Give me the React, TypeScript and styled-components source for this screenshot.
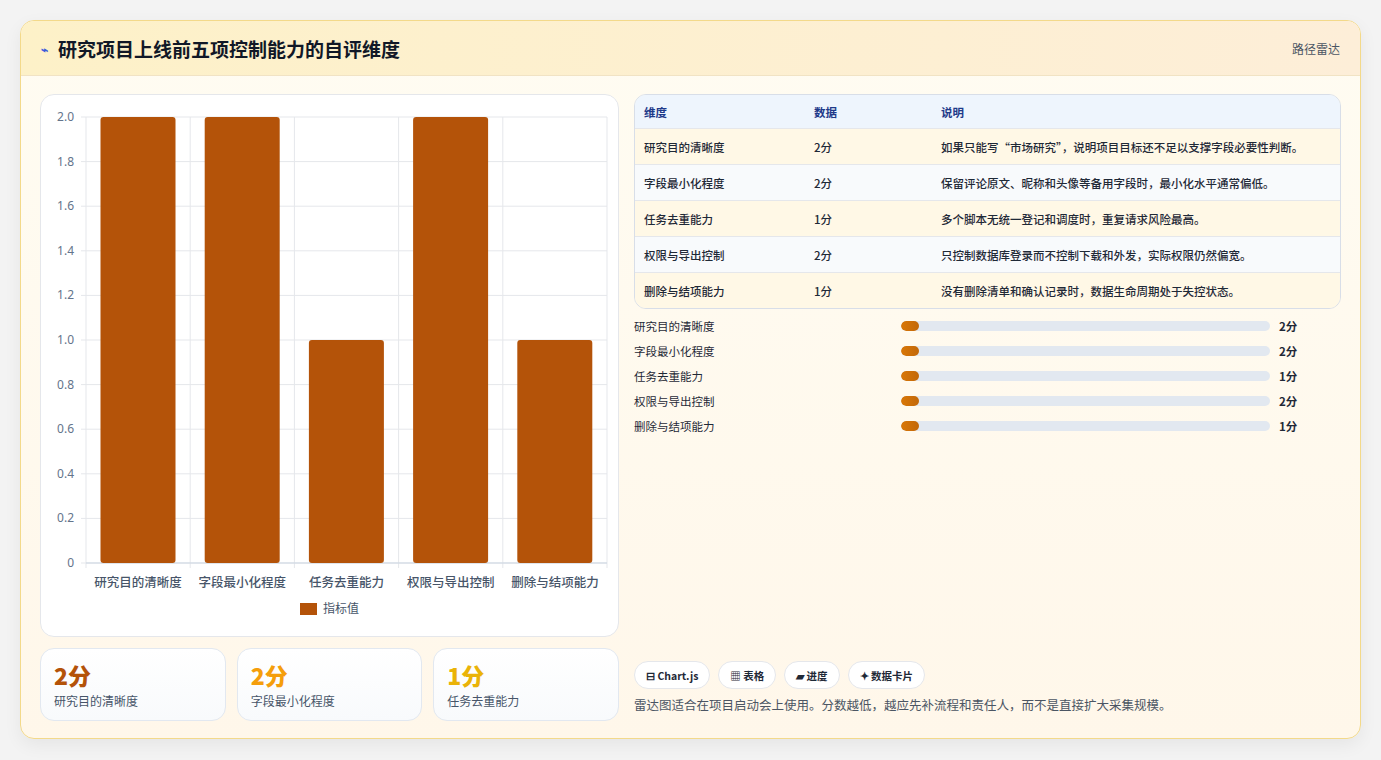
import React from "react";
import styled, { createGlobalStyle } from "styled-components";

const G = createGlobalStyle`
  html,body{margin:0;padding:0;background:#f3f3f3;}
  body{font-family:"Noto Sans CJK SC","Noto Sans",sans-serif;}
`;
const Page = styled.div`padding:20px 20px 20px 20px;width:1381px;box-sizing:border-box;`;
const Card = styled.div`
  width:1341px;height:719px;box-sizing:border-box;border:1px solid #f3d98a;border-radius:14px;
  background:linear-gradient(180deg,#fffcf2,#fff7ea);overflow:hidden;display:flex;flex-direction:column;
  box-shadow:0 6px 18px rgba(0,0,0,0.06);
`;
const Header = styled.div`
  height:54px;flex:none;display:flex;align-items:center;justify-content:space-between;padding:0 20px;
  background:linear-gradient(90deg,#fdf1c8,#fdeed8);border-bottom:1px solid #f1e3c4;
`;
const Title = styled.h1`margin:0;font-size:19px;font-weight:700;color:#111827;display:flex;align-items:center;gap:10px;`;
const Icon = styled.span`color:#3b5bdb;font-size:12px;`;
const Tag = styled.span`font-size:12px;color:#4b5563;`;
const Body = styled.div`flex:1;display:grid;grid-template-columns:579px 707px;gap:15px;padding:18px 19px 18px 19px;`;
const Col = styled.div`display:flex;flex-direction:column;gap:11px;`;
const ChartBox = styled.div`height:543px;background:#fff;border:1px solid #e5e7eb;border-radius:14px;box-sizing:border-box;`;
const Stats = styled.div`display:grid;grid-template-columns:repeat(3,1fr);gap:11px;`;
const Stat = styled.div`height:73px;box-sizing:border-box;border:1px solid #e2e8f0;border-radius:14px;background:linear-gradient(180deg,#fff,#f8fafc);padding:11px 13px;`;
const Num = styled.div<{ c: string }>`font-size:23px;font-weight:800;color:${p => p.c};line-height:30px;`;
const SLabel = styled.div`font-size:12px;color:#475569;margin-top:2px;`;
const Table = styled.div`border:1px solid #d8dee8;border-radius:12px;overflow:hidden;`;
const Row = styled.div<{ head?: boolean; alt?: boolean }>`
  display:grid;grid-template-columns:170px 127px 1fr;height:${p => (p.head ? 33 : 35)}px;align-items:center;padding:0 9px;
  font-size:11.5px;font-weight:${p => (p.head ? 700 : 500)};color:${p => (p.head ? "#1e3a8a" : "#1f2937")};
  background:${p => (p.head ? "#eef5fd" : p.alt ? "#f8fafc" : "#fff8e6")};
  border-top:${p => (p.head ? "none" : "1px solid #e5e7eb")};
`;
const Bars = styled.div`display:flex;flex-direction:column;gap:7px;margin-top:8px;`;
const BarRow = styled.div`display:grid;grid-template-columns:267px 369px 1fr;align-items:center;height:18px;font-size:11.5px;color:#1f2937;`;
const Track = styled.div`height:10px;border-radius:5px;background:#e2e8f0;overflow:hidden;`;
const Fill = styled.div`height:100%;border-radius:5px;background:linear-gradient(90deg,#d97706,#c2680a);`;
const Val = styled.span`font-weight:700;padding-left:9px;`;
const Spacer = styled.div`flex:1;`;
const Chips = styled.div`display:flex;gap:8px;`;
const Chip = styled.span`height:28px;box-sizing:border-box;padding:0 11px;display:flex;align-items:center;border:1px solid #e5e7eb;border-radius:14px;background:#fff;font-size:10.5px;font-weight:700;color:#1f2937;`;
const Note = styled.p`margin:6px 0 7px;font-size:12.5px;color:#4b5563;`;

const data = [
  ["研究目的清晰度", 2, "如果只能写“市场研究”，说明项目目标还不足以支撑字段必要性判断。"],
  ["字段最小化程度", 2, "保留评论原文、昵称和头像等备用字段时，最小化水平通常偏低。"],
  ["任务去重能力", 1, "多个脚本无统一登记和调度时，重复请求风险最高。"],
  ["权限与导出控制", 2, "只控制数据库登录而不控制下载和外发，实际权限仍然偏宽。"],
  ["删除与结项能力", 1, "没有删除清单和确认记录时，数据生命周期处于失控状态。"],
] as const;

function Chart() {
  const L = 45, R = 566, T = 22, B = 468, cw = (R - L) / 5;
  const ticks = [0, 0.2, 0.4, 0.6, 0.8, 1.0, 1.2, 1.4, 1.6, 1.8, 2.0];
  return (
    <svg width="577" height="541" style={{ display: "block" }}>
      {ticks.map(t => {
        const y = B - (t / 2) * (B - T);
        return (
          <g key={t}>
            <line x1={L - 5} x2={R} y1={y} y2={y} stroke="#e5e7eb" />
            <text x={L - 12} y={y + 4} textAnchor="end" fontSize="12" fill="#64748b" fontFamily="Noto Sans">{t === 0 ? "0" : t.toFixed(1)}</text>
          </g>
        );
      })}
      {[0, 1, 2, 3, 4, 5].map(i => <line key={i} x1={L + i * cw} x2={L + i * cw} y1={T} y2={B + 5} stroke="#e5e7eb" />)}
      <line x1={L} x2={R} y1={B} y2={B} stroke="#cbd5e1" />
      {data.map((d, i) => {
        const h = ((d[1] as number) / 2) * (B - T);
        return (
          <g key={i}>
            <rect x={L + i * cw + 14.5} y={B - h} width={75} height={h} rx="3" fill="#b45309" />
            <text x={L + i * cw + cw / 2} y={B + 24} textAnchor="middle" fontSize="12.5" fill="#475569" fontWeight="500" fontFamily="Noto Sans CJK SC">{d[0]}</text>
          </g>
        );
      })}
      <rect x={259} y={508} width={17} height={12} fill="#b45309" />
      <text x={282} y={518} fontSize="12" fill="#475569" fontFamily="Noto Sans CJK SC">指标值</text>
    </svg>
  );
}

export default function App() {
  return (
    <Page>
      <G />
      <Card>
        <Header>
          <Title><Icon>⌁</Icon>研究项目上线前五项控制能力的自评维度</Title>
          <Tag>路径雷达</Tag>
        </Header>
        <Body>
          <Col>
            <ChartBox><Chart /></ChartBox>
            <Stats>
              <Stat><Num c="#b45309">2分</Num><SLabel>研究目的清晰度</SLabel></Stat>
              <Stat><Num c="#f59e0b">2分</Num><SLabel>字段最小化程度</SLabel></Stat>
              <Stat><Num c="#eab308">1分</Num><SLabel>任务去重能力</SLabel></Stat>
            </Stats>
          </Col>
          <Col style={{ gap: 0 }}>
            <Table>
              <Row head><span>维度</span><span>数据</span><span>说明</span></Row>
              {data.map((d, i) => (
                <Row key={i} alt={i % 2 === 1}><span>{d[0]}</span><span>{d[1]}分</span><span>{d[2]}</span></Row>
              ))}
            </Table>
            <Bars>
              {data.map((d, i) => (
                <BarRow key={i}><span>{d[0]}</span><Track><Fill style={{ width: "5%" }} /></Track><Val>{d[1]}分</Val></BarRow>
              ))}
            </Bars>
            <Spacer />
            <Chips>
              <Chip>⊟ Chart.js</Chip><Chip>▦ 表格</Chip><Chip>▰ 进度</Chip><Chip>✦ 数据卡片</Chip>
            </Chips>
            <Note>雷达图适合在项目启动会上使用。分数越低，越应先补流程和责任人，而不是直接扩大采集规模。</Note>
          </Col>
        </Body>
      </Card>
    </Page>
  );
}
